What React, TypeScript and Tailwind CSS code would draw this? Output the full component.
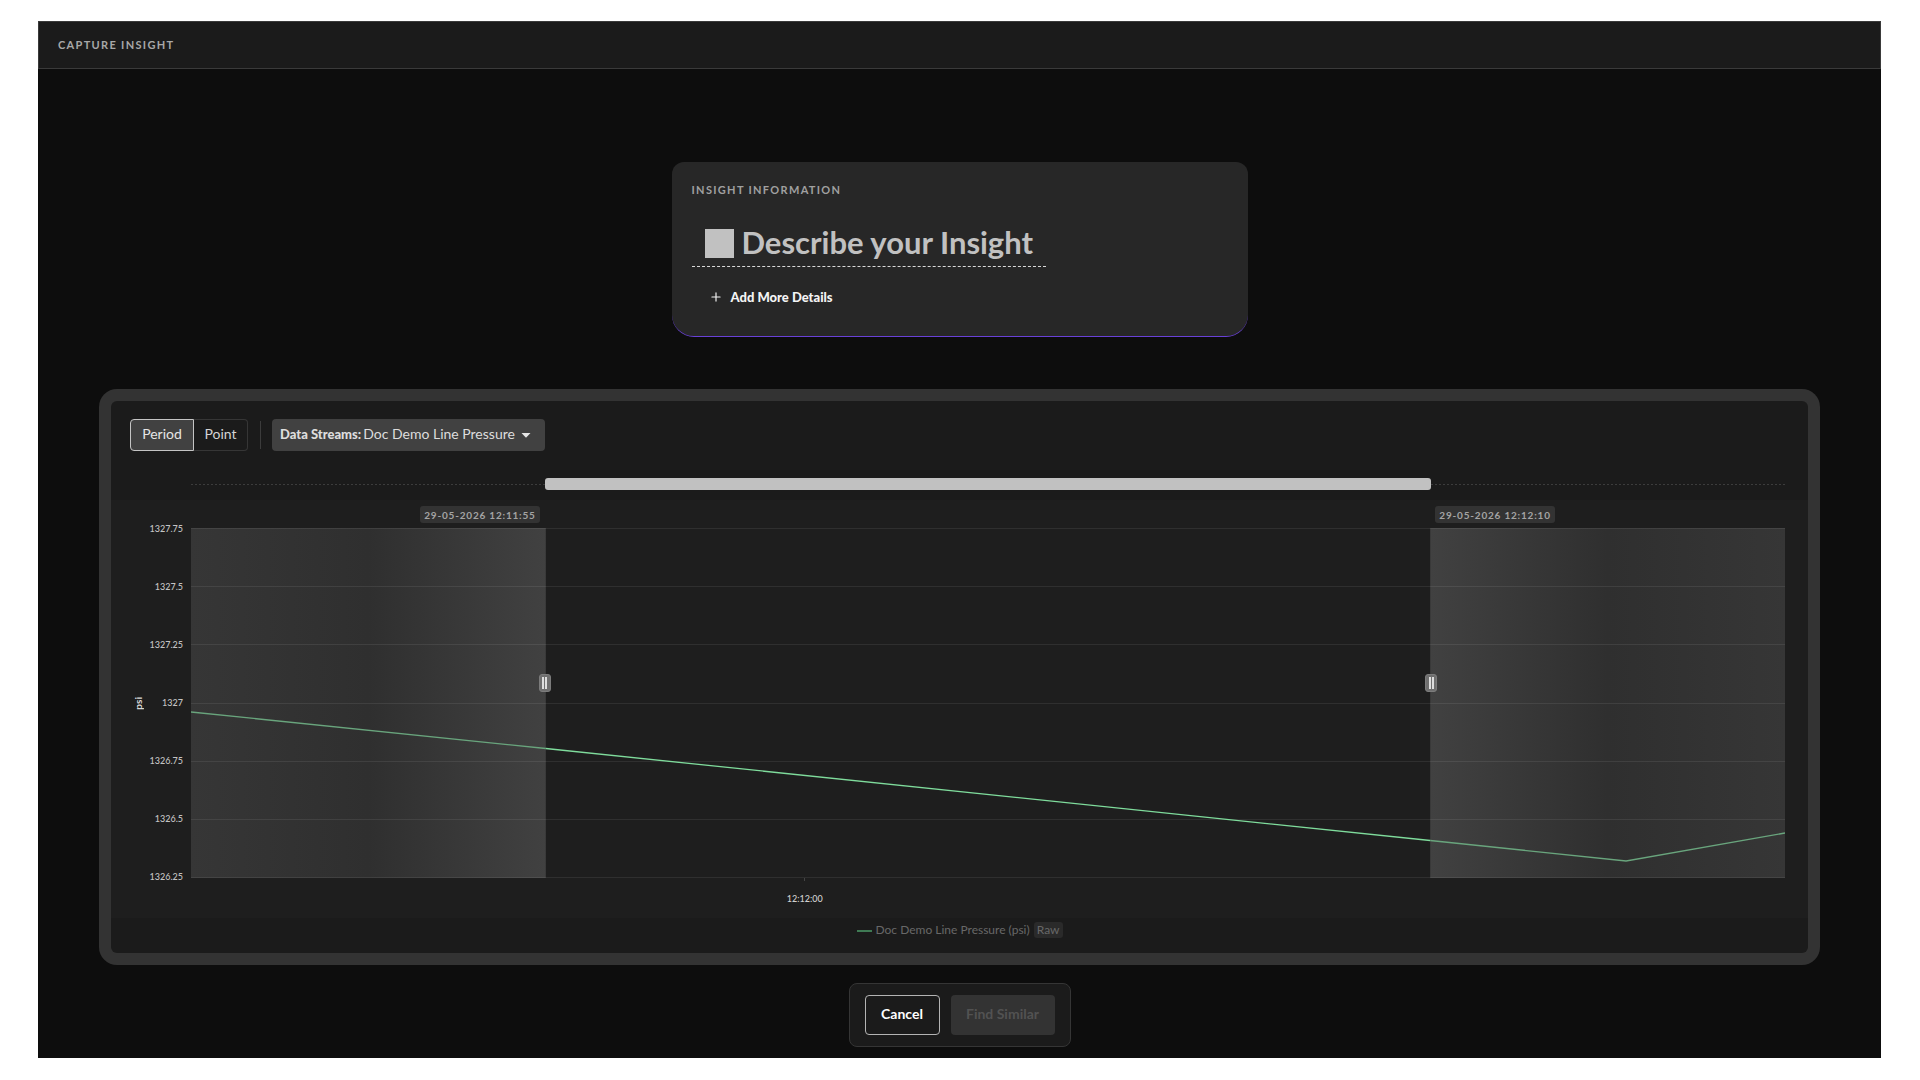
import React from "react";
import { Plus } from "lucide-react";

const yLabels = ["1327.75", "1327.5", "1327.25", "1327", "1326.75", "1326.5", "1326.25"];

const PLOT_W = 1595;
const PLOT_H = 350;
const LEFT_EDGE = 355;
const RIGHT_EDGE = 1240;

function Handle({ side }: { side: "start" | "end" }) {
  return (
    <button
      type="button"
      aria-label={side === "start" ? "Move period start" : "Move period end"}
      className={
        "absolute top-[146px] flex h-[18px] w-3 -translate-x-1/2 cursor-ew-resize items-center justify-center gap-px rounded-[3px] border border-[#7c7c7c] bg-[#6f6f6f] " +
        (side === "start" ? "left-[22.2%]" : "left-[77.8%]")
      }
    >
      <span className="h-3 w-0.5 bg-[#dedede]" />
      <span className="h-3 w-0.5 bg-[#dedede]" />
    </button>
  );
}

function TimeBadge({ children }: { children: string }) {
  return (
    <span className="flex h-[17px] items-center rounded-[3px] bg-[#333333] px-1 text-[10px] leading-none font-bold tracking-[0.08em] whitespace-nowrap text-[#a4a4a4]">
      {children}
    </span>
  );
}

function DottedTrack() {
  return (
    <span className="h-px flex-1 bg-[repeating-linear-gradient(90deg,#3c3c3c_0_2px,transparent_2px_4px)]" />
  );
}

function Plot() {
  return (
    <svg
      viewBox={`0 0 ${PLOT_W} ${PLOT_H}`}
      preserveAspectRatio="none"
      className="absolute inset-0 h-full w-full"
      role="img"
      aria-label="Doc Demo Line Pressure in psi"
    >
      <defs>
        <linearGradient id="shade-left" x1="0" x2="1" y1="0" y2="0">
          <stop offset="0" stopColor="#363636" />
          <stop offset="0.5" stopColor="#2f2f2f" />
          <stop offset="1" stopColor="#414141" />
        </linearGradient>
        <linearGradient id="shade-right" x1="1" x2="0" y1="0" y2="0">
          <stop offset="0" stopColor="#363636" />
          <stop offset="0.5" stopColor="#2f2f2f" />
          <stop offset="1" stopColor="#414141" />
        </linearGradient>
      </defs>
      <rect x="0" y="0" width={LEFT_EDGE} height={PLOT_H} fill="url(#shade-left)" />
      <rect x={RIGHT_EDGE} y="0" width={PLOT_W - RIGHT_EDGE} height={PLOT_H} fill="url(#shade-right)" />
      {yLabels.map((label, i) => (
        <rect
          key={label}
          x="0"
          y={Math.round((i * (PLOT_H - 1)) / 6)}
          width={PLOT_W}
          height="1"
          fill="#ffffff"
          fillOpacity="0.08"
        />
      ))}
      <g fill="none" strokeWidth="1.3" vectorEffect="non-scaling-stroke">
        <polyline points="0,184 355,220.5" stroke="#69a57d" />
        <polyline points="355,220.5 1240,312.5" stroke="#7fdc9c" />
        <polyline points="1240,312.5 1436,333 1595,305" stroke="#69a57d" />
      </g>
    </svg>
  );
}

export default function App() {
  return (
    <div className="flex min-h-screen flex-col bg-white pt-[21px] pr-[39px] pb-[22px] pl-[38px] font-['Lato',sans-serif]">
      <div className="flex flex-1 flex-col bg-[#0d0d0d]">
        <header className="flex h-12 items-center border border-[#3a3a3a] bg-[#1b1b1b] px-[19px] pb-0.5">
          <h1 className="text-[11px] leading-none font-bold tracking-[0.12em] text-[#a8a8a8]">
            CAPTURE INSIGHT
          </h1>
        </header>

        <main className="flex flex-1 flex-col items-center px-[61px] pt-[93px] pb-[11px]">
          <section className="w-full max-w-[576px] rounded-t-[12px] rounded-b-[22px] border-b border-[#6941d8] bg-[#272727] px-5 pt-[22px] pb-[31px]">
            <h2 className="text-[11px] leading-3 font-bold tracking-[0.12em] text-[#a0a0a0]">
              INSIGHT INFORMATION
            </h2>
            <label className="mt-[27px] flex w-[354px] items-center gap-2 border-b border-dashed border-[#d8d8d8] pb-[3px] pl-[13px]">
              <span className="h-[29px] w-[29px] shrink-0 bg-[#c1c1c1]" />
              <input
                aria-label="Insight description"
                placeholder="Describe your Insight"
                className="h-10 w-full min-w-0 bg-transparent pb-0.5 text-[31px] leading-10 font-bold text-[#c1c1c1] outline-none placeholder:text-[#c1c1c1] placeholder:opacity-100"
              />
            </label>
            <button
              type="button"
              className="mt-[22px] ml-[17px] flex h-4 items-center gap-2 text-[13px] leading-4 font-black text-[#f4f4f4]"
            >
              <Plus size={14} strokeWidth={2} />
              Add More Details
            </button>
          </section>

          <section className="mt-[52px] flex w-full flex-1 flex-col rounded-[18px] bg-[#333333] p-3">
            <div className="flex flex-1 flex-col rounded-[6px] bg-[#1b1b1b]">
              <div className="flex h-[50px] items-end pl-[19px]">
                <div className="flex h-8" role="group" aria-label="Selection type">
                  <button
                    type="button"
                    aria-pressed="true"
                    className="w-16 rounded-l-[4px] border border-[#c4c4c4] bg-[#414141] pb-0.5 text-[14px] leading-none text-[#e6e6e6]"
                  >
                    Period
                  </button>
                  <button
                    type="button"
                    aria-pressed="false"
                    className="w-[54px] rounded-r-[4px] border border-l-0 border-[#363636] pb-0.5 text-[14px] leading-none text-[#d4d4d4]"
                  >
                    Point
                  </button>
                </div>
                <div className="mr-[11px] mb-0.5 ml-3 h-7 w-px bg-[#3c3c3c]" />
                <button
                  type="button"
                  aria-haspopup="listbox"
                  className="flex h-8 items-center rounded-[4px] bg-[#414141] pr-[14px] pb-0.5 pl-2 leading-none text-[#dddddd]"
                >
                  <span className="mr-0.5 text-[13px] font-black">Data Streams:</span>
                  <span className="text-[14px]">Doc Demo Line Pressure</span>
                  <svg viewBox="0 0 10 5" className="mt-0.5 ml-[6px] h-[5px] w-[10px]" aria-hidden="true">
                    <path d="M0.5 0H9.5L5 4.8Z" fill="#e6e6e6" />
                  </svg>
                </button>
              </div>

              <div className="mt-[27px] mb-[10px] flex h-3 items-center pr-[23px] pl-20">
                <DottedTrack />
                <div className="h-3 w-[55.6%] rounded-[3px] bg-[#c1c1c1]" />
                <DottedTrack />
              </div>

              <div className="flex flex-1 flex-col bg-[#1e1e1e] pr-[23px]">
                <div className="flex justify-between pt-[6px] pb-[5px] pl-[79px]">
                  <div className="flex w-[22.3%] justify-end pr-[6px]">
                    <TimeBadge>29-05-2026 12:11:55</TimeBadge>
                  </div>
                  <div className="flex w-[22.3%] pl-[6px]">
                    <TimeBadge>29-05-2026 12:12:10</TimeBadge>
                  </div>
                </div>

                <div className="flex flex-1">
                  <div className="flex w-20 shrink-0 items-center">
                    <span className="ml-[21px] w-3 rotate-180 text-[10px] leading-3 font-bold text-[#d8d8d8] [writing-mode:vertical-rl]">
                      psi
                    </span>
                    <div className="flex flex-1 flex-col justify-between self-stretch pr-2 pb-px text-[9px] leading-none font-medium text-[#c4c4c4]">
                      {yLabels.map((label) => (
                        <span key={label} className="flex h-0 items-center justify-end">
                          {label}
                        </span>
                      ))}
                    </div>
                  </div>
                  <div className="relative flex-1">
                    <Plot />
                    <Handle side="start" />
                    <Handle side="end" />
                  </div>
                </div>

                <div className="flex h-10 pl-20">
                  <div className="w-[38.5%]" />
                  <div className="flex w-0 flex-col items-center">
                    <span className="h-[3px] w-px bg-[#444444]" />
                    <span className="mt-[13px] text-[9px] leading-[10px] font-medium whitespace-nowrap text-[#d0d0d0]">
                      12:12:00
                    </span>
                  </div>
                </div>
              </div>

              <div className="flex h-[35px] items-start justify-center pt-1 text-[12px] leading-none text-[#686868]">
                <span className="mt-2 mr-1 h-0.5 w-[15px] bg-[#3f7a54]" />
                <span className="mr-1 leading-4">Doc Demo Line Pressure (psi)</span>
                <span className="rounded-[3px] bg-[#2a2a2a] px-[3px] leading-4">Raw</span>
              </div>
            </div>
          </section>

          <footer className="mt-[18px] flex gap-[11px] rounded-[8px] border border-[#353535] bg-[#1b1b1b] px-[15px] py-[11px]">
            <button
              type="button"
              className="h-10 w-[75px] rounded-[4px] border border-[#b4b4b4] pb-0.5 text-[14px] leading-none font-bold text-white"
            >
              Cancel
            </button>
            <button
              type="button"
              disabled
              className="h-10 w-[104px] rounded-[4px] bg-[#333333] pb-0.5 text-[14px] leading-none font-bold text-[#525252]"
            >
              Find Similar
            </button>
          </footer>
        </main>
      </div>
    </div>
  );
}
